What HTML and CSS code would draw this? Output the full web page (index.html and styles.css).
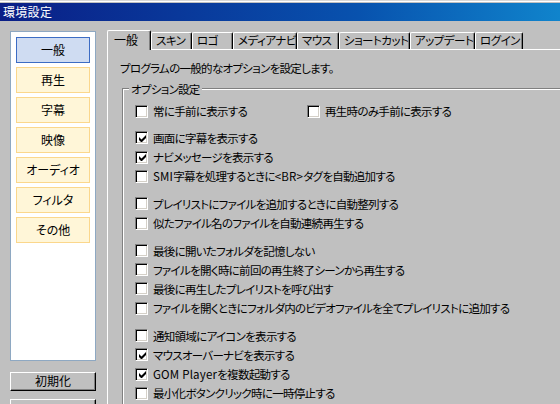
FILE: index.html
```html
<!DOCTYPE html>
<html lang="ja">
<head>
<meta charset="utf-8">
<title>環境設定</title>
<link rel="stylesheet" href="styles.css">
</head>
<body>
<div class="window">
  <div class="titlebar"><span class="title">環境設定</span></div>
  <div class="content">
    <div class="sidebar">
      <div class="navlist">
        <div class="nav active">一般</div>
        <div class="nav">再生</div>
        <div class="nav">字幕</div>
        <div class="nav">映像</div>
        <div class="nav">オーディオ</div>
        <div class="nav">フィルタ</div>
        <div class="nav">その他</div>
      </div>
      <div class="btn first">初期化</div>
      <div class="btn second"></div>
    </div>
    <div class="tabs">
      <div class="tabstrip">
        <div class="tab selected w44">一般</div>
        <div class="tab w41">スキン</div>
        <div class="tab w41">ロゴ</div>
        <div class="tab w64">メディアナビ</div>
        <div class="tab w42">マウス</div>
        <div class="tab w71">ショートカット</div>
        <div class="tab w65">アップデート</div>
        <div class="tab w48">ログイン</div>
      </div>
      <div class="tabpanel">
        <p class="desc">プログラムの一般的なオプションを設定します。</p>
        <div class="group">
          <div class="legend">オプション設定</div>
          <div class="cg cg-first">
            <div class="row">
              <div class="item wide"><span class="cb"></span><span>常に手前に表示する</span></div>
              <div class="item"><span class="cb"></span><span>再生時のみ手前に表示する</span></div>
            </div>
          </div>
          <div class="cg cg-a">
            <div class="row"><span class="cb on"><svg viewBox="0 0 7 7" width="7" height="7"><path d="M0 2v3l2 2h1l4-4V0L2.5 4.5Z" fill="#000"/></svg></span><span>画面に字幕を表示する</span></div>
            <div class="row"><span class="cb on"><svg viewBox="0 0 7 7" width="7" height="7"><path d="M0 2v3l2 2h1l4-4V0L2.5 4.5Z" fill="#000"/></svg></span><span>ナビメッセージを表示する</span></div>
            <div class="row"><span class="cb"></span><span><span class="latin">SMI</span>字幕を処理するときに<span class="latin">&lt;BR&gt;</span>タグを自動追加する</span></div>
          </div>
          <div class="cg">
            <div class="row"><span class="cb"></span><span>プレイリストにファイルを追加するときに自動整列する</span></div>
            <div class="row"><span class="cb"></span><span>似たファイル名のファイルを自動連続再生する</span></div>
          </div>
          <div class="cg">
            <div class="row"><span class="cb"></span><span>最後に開いたフォルダを記憶しない</span></div>
            <div class="row"><span class="cb"></span><span>ファイルを開く時に前回の再生終了シーンから再生する</span></div>
            <div class="row"><span class="cb"></span><span>最後に再生したプレイリストを呼び出す</span></div>
            <div class="row"><span class="cb"></span><span>ファイルを開くときにフォルダ内のビデオファイルを全てプレイリストに追加する</span></div>
          </div>
          <div class="cg">
            <div class="row"><span class="cb"></span><span>通知領域にアイコンを表示する</span></div>
            <div class="row"><span class="cb on"><svg viewBox="0 0 7 7" width="7" height="7"><path d="M0 2v3l2 2h1l4-4V0L2.5 4.5Z" fill="#000"/></svg></span><span>マウスオーバーナビを表示する</span></div>
            <div class="row"><span class="cb on"><svg viewBox="0 0 7 7" width="7" height="7"><path d="M0 2v3l2 2h1l4-4V0L2.5 4.5Z" fill="#000"/></svg></span><span><span class="latin">GOM Player</span>を複数起動する</span></div>
            <div class="row"><span class="cb"></span><span>最小化ボタンクリック時に一時停止する</span></div>
          </div>
        </div>
      </div>
    </div>
  </div>
</div>
</body>
</html>
```
FILE: styles.css
```css
html, body {
  margin: 0;
  padding: 0;
}
body {
  width: 560px;
  height: 404px;
  overflow: hidden;
  background: #c0c0c0;
  font-family: "Noto Sans CJK JP", "Noto Sans", sans-serif;
  font-size: 11.5px;
  letter-spacing: -0.7px;
  color: #000;
  font-feature-settings: "palt";
}
.window {
  width: 560px;
  height: 404px;
  overflow: hidden;
  background: linear-gradient(#d8d8d8 0 1px, #ffffff 1px 2px, #c0c0c0 2px);
  padding-top: 3px;
  box-sizing: border-box;
}
.titlebar {
  height: 18px;
  background: linear-gradient(to right, #0a1e86 0%, #0852ae 64%, #1084cc 100%);
  display: flex;
  align-items: center;
  padding-left: 3px;
}
.title {
  color: #fff;
  font-size: 12px;
  line-height: 14px;
  letter-spacing: 0.3px;
}
.content {
  display: flex;
}
.sidebar {
  width: 86px;
  margin-left: 10px;
  margin-top: 10px;
  flex: none;
}
.navlist {
  height: 330px;
  box-sizing: border-box;
  border: 1px solid #8ea8c2;
  background: #fff;
  padding: 5px;
  display: flex;
  flex-direction: column;
  gap: 4px;
}
.nav {
  height: 26px;
  box-sizing: border-box;
  border: 1px solid #fbd78c;
  background: #fff6d8;
  text-align: center;
  line-height: 24px;
  font-size: 12px;
  letter-spacing: 0;
}
.nav.active {
  border-color: #3c6cc4;
  background: #cfdcf2;
}
.btn {
  height: 19px;
  box-sizing: border-box;
  border-top: 1px solid #fff;
  border-left: 1px solid #fff;
  border-right: 1px solid #000;
  border-bottom: 1px solid #000;
  box-shadow: inset -1px -1px 0 #808080;
  text-align: center;
  line-height: 16px;
  font-size: 12px;
  letter-spacing: 0;
}
.btn.first {
  margin-top: 11px;
}
.btn.second {
  margin-top: 8px;
}
.tabs {
  margin-left: 11px;
  margin-top: 9px;
  flex: 1;
}
.tabstrip {
  display: flex;
  align-items: flex-end;
  height: 19px;
}
.tab {
  height: 17px;
  box-sizing: border-box;
  border-top: 1px solid #fff;
  border-left: 1px solid #fff;
  border-right: 1px solid #000;
  box-shadow: inset -1px 0 0 #808080;
  border-top-left-radius: 2px;
  border-top-right-radius: 2px;
  padding-left: 4px;
  line-height: 15px;
  letter-spacing: -0.5px;
  white-space: nowrap;
  flex: none;
}
.tab.selected {
  height: 20px;
  margin-bottom: -1px;
  position: relative;
  z-index: 1;
  background: #c0c0c0;
  padding-left: 6px;
  line-height: 17px;
  font-size: 12px;
  letter-spacing: 0;
}
.w41 { width: 41px; }
.w42 { width: 42px; }
.w44 { width: 44px; }
.w48 { width: 48px; }
.w64 { width: 64px; }
.w65 { width: 65px; }
.w71 { width: 71px; }
.tabpanel {
  border-top: 1px solid #fff;
  border-left: 1px solid #fff;
  padding-left: 12px;
  height: 400px;
}
.desc {
  margin: 10px 0 0 0;
  line-height: 16px;
  white-space: nowrap;
}
.group {
  margin-top: 12px;
  margin-left: 2px;
  border-top: 1px solid #808080;
  border-left: 1px solid #808080;
  box-shadow: inset 1px 1px 0 #fff;
  padding-left: 12px;
  height: 400px;
}
.legend {
  display: block;
  width: max-content;
  margin-top: -7px;
  margin-left: -6px;
  padding: 0 2px;
  background: #c0c0c0;
  line-height: 14px;
  height: 14px;
}
.cg {
  margin-top: 8.4px;
}
.cg.cg-first {
  margin-top: 5.8px;
}
.cg.cg-a {
  margin-top: 7.3px;
}
.row {
  height: 19.2px;
  display: flex;
  align-items: center;
  white-space: nowrap;
}
.latin {
  letter-spacing: 0.2px;
}
.item {
  display: flex;
  align-items: center;
}
.item.wide {
  width: 172px;
}
.cb {
  width: 13px;
  height: 13px;
  box-sizing: border-box;
  flex: none;
  background: #fff;
  border-top: 1px solid #808080;
  border-left: 1px solid #808080;
  border-right: 1px solid #fff;
  border-bottom: 1px solid #fff;
  box-shadow: inset 1px 1px 0 #000, inset -1px -1px 0 #d4d0c8;
  margin-right: 5px;
  display: flex;
  align-items: center;
  justify-content: center;
}
.cb svg {
  display: block;
  margin-left: 1px;
  margin-top: 1px;
}
```
